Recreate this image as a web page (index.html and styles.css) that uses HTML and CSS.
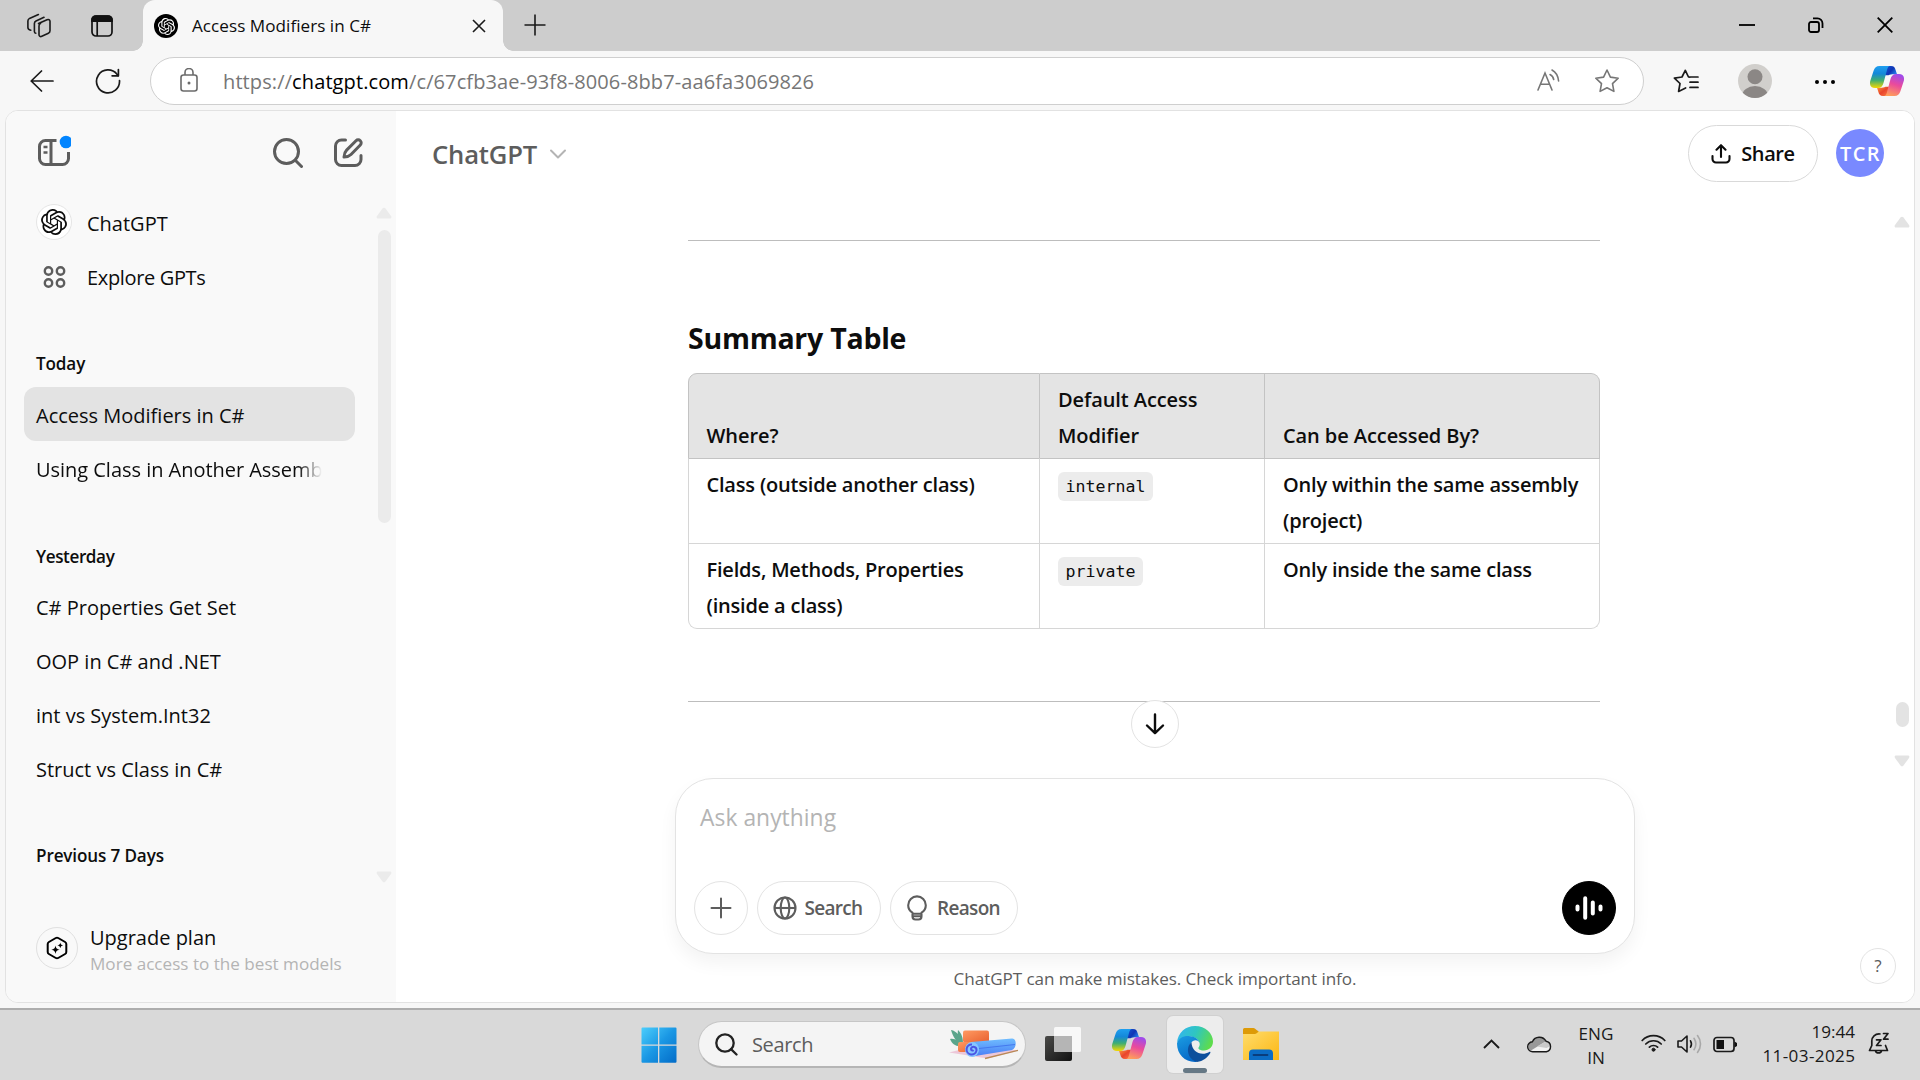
FILE: index.html
```html
<!DOCTYPE html>
<html lang="en">
<head>
<meta charset="utf-8">
<title>Access Modifiers in C#</title>
<link rel="stylesheet" href="styles.css">
</head>
<body>
<svg class="defs" width="0" height="0" aria-hidden="true">
  <defs>
    <symbol id="openai" viewBox="0 0 24 24"><path fill="currentColor" d="M22.2819 9.8211a5.9847 5.9847 0 0 0-.5157-4.9108 6.0462 6.0462 0 0 0-6.5098-2.9A6.0651 6.0651 0 0 0 4.9807 4.1818a5.9847 5.9847 0 0 0-3.9977 2.9 6.0462 6.0462 0 0 0 .7427 7.0966 5.98 5.98 0 0 0 .511 4.9107 6.051 6.051 0 0 0 6.5146 2.9001A5.9847 5.9847 0 0 0 13.2599 24a6.0557 6.0557 0 0 0 5.7718-4.2058 5.9894 5.9894 0 0 0 3.9977-2.9001 6.0557 6.0557 0 0 0-.7475-7.0729zm-9.022 12.6081a4.4755 4.4755 0 0 1-2.8764-1.0408l.1419-.0804 4.7783-2.7582a.7948.7948 0 0 0 .3927-.6813v-6.7369l2.02 1.1686a.071.071 0 0 1 .038.052v5.5826a4.504 4.504 0 0 1-4.4945 4.4944zm-9.6607-4.1254a4.4708 4.4708 0 0 1-.5346-3.0137l.142.0852 4.783 2.7582a.7712.7712 0 0 0 .7806 0l5.8428-3.3685v2.3324a.0804.0804 0 0 1-.0332.0615L9.74 19.9502a4.4992 4.4992 0 0 1-6.1408-1.6464zM2.3408 7.8956a4.485 4.485 0 0 1 2.3655-1.9728V11.6a.7664.7664 0 0 0 .3879.6765l5.8144 3.3543-2.0201 1.1685a.0757.0757 0 0 1-.071 0l-4.8303-2.7865A4.504 4.504 0 0 1 2.3408 7.872zm16.5963 3.8558L13.1038 8.364 15.1192 7.2a.0757.0757 0 0 1 .071 0l4.8303 2.7913a4.4944 4.4944 0 0 1-.6765 8.1042v-5.6772a.79.79 0 0 0-.407-.667zm2.0107-3.0231l-.142-.0852-4.7735-2.7818a.7759.7759 0 0 0-.7854 0L9.409 9.2297V6.8974a.0662.0662 0 0 1 .0284-.0615l4.8303-2.7866a4.4992 4.4992 0 0 1 6.6802 4.66zM8.3065 12.863l-2.02-1.1638a.0804.0804 0 0 1-.038-.0567V6.0742a4.4992 4.4992 0 0 1 7.3757-3.4537l-.142.0805L8.704 5.459a.7948.7948 0 0 0-.3927.6813zm1.0976-2.3654l2.602-1.4998 2.6069 1.4998v2.9994l-2.5974 1.4997-2.6067-1.4997Z"/></symbol>
    <linearGradient id="cpLeft" x1="0" y1="0" x2="0" y2="1"><stop offset="0" stop-color="#1f9ff0"/><stop offset=".35" stop-color="#1488d8"/><stop offset=".65" stop-color="#3fae72"/><stop offset="1" stop-color="#f5d800"/></linearGradient>
    <linearGradient id="cpTop" x1="0" y1="0" x2="1" y2=".6"><stop offset="0" stop-color="#1556d8"/><stop offset=".6" stop-color="#0f35b4"/><stop offset="1" stop-color="#2378e6"/></linearGradient>
    <linearGradient id="cpRight" x1=".6" y1="0" x2=".3" y2="1"><stop offset="0" stop-color="#a04bea"/><stop offset=".45" stop-color="#ea4a9c"/><stop offset="1" stop-color="#ffa05a"/></linearGradient>
    <linearGradient id="cpBottom" x1="0" y1="0" x2="1" y2="1"><stop offset="0" stop-color="#ff9a3c"/><stop offset=".5" stop-color="#e8452c"/><stop offset="1" stop-color="#ff7a45"/></linearGradient>
    <symbol id="copilot" viewBox="0 0 34 30">
      <path fill="url(#cpTop)" d="M16 0h5c3 0 4 1.600 4.700 4.200L27 8.200h-3c-2.500 0-4 .2-5.500 1H15z"/>
      <path fill="url(#cpBottom)" d="M18 30h-5c-3 0-4-1.600-4.700-4.200L7 21.800h3c2.500 0 4-.2 5.500-1H19z"/>
      <path fill="url(#cpLeft)" d="M9.500 0H20c-1.600 0-2.200 1.300-2.800 3.200L13.500 17c-.8 3-2.600 5-5.600 5H5c-4 0-6-3-4.600-7.500L3.600 4.800C4.600 1.800 6.300 0 9.500 0z"/>
      <path fill="url(#cpRight)" d="M24.500 30H14c1.600 0 2.200-1.300 2.800-3.200L20.500 13c.8-3 2.600-5 5.600-5H29c4 0 6 3 4.600 7.500l-3.200 9.700c-1 3-2.700 4.800-5.900 4.800z"/>
    </symbol>
  </defs>
</svg>

<div class="browser">
  <div class="tabbar">
    <div class="tab-tools">
      <svg width="26" height="26" viewBox="0 0 26 26" fill="none" stroke="#1a1a1a" stroke-width="1.600" stroke-linejoin="round" stroke-linecap="round"><path d="M12.500 10.500 21 6.800c1.600-.7 3 0 3 1.500v9.400c0 1.200-.5 2-1.600 2.500l-6.600 3.100c-1.500.7-2.800 0-2.800-1.500v-8.900c0-1.200.4-2 1.500-2.400"/><path d="M9.800 20.200c-1-.1-1.400-.8-1.400-1.800v-8c0-1.300.5-2 1.600-2.500L18 4.300"/><path d="M4.800 17.200c-2-.3-2.900-1-2.900-2.600V8c0-1.300.5-2 1.600-2.600L12.400 1.500"/></svg>
      <svg width="22" height="22" viewBox="0 0 22 22" fill="none" stroke="#111" stroke-width="1.700"><rect x="1" y="1" width="20" height="20" rx="4"/><path fill="#111" d="M1 6.200V5a4 4 0 0 1 4-4h12a4 4 0 0 1 4 4v1.200zM6.200 6v15"/></svg>
    </div>
    <div class="tab">
      <span class="favicon"><svg width="17" height="17"><use href="#openai"/></svg></span>
      <span class="tab-title">Access Modifiers in C#</span>
      <svg width="14" height="14" viewBox="0 0 14 14" stroke="#1a1a1a" stroke-width="1.600" fill="none"><path d="m1 1 12 12M13 1 1 13"/></svg>
    </div>
    <svg class="new-tab" width="22" height="22" viewBox="0 0 22 22" stroke="#1a1a1a" stroke-width="1.600"><path d="M11 .5v21M.5 11h21"/></svg>
    <div class="window-controls">
      <svg width="16" height="16" viewBox="0 0 16 16" stroke="#000" stroke-width="1.800"><path d="M0 8h16"/></svg>
      <svg width="16" height="16" viewBox="0 0 16 16" stroke="#000" stroke-width="1.800" fill="none"><rect x="1" y="5" width="10" height="10" rx="2"/><path d="M5 1.400h4.500a5 5 0 0 1 5 5V11"/></svg>
      <svg width="16" height="16" viewBox="0 0 16 16" stroke="#000" stroke-width="1.800"><path d="m.7.7 14.600 14.600M15.300.7.7 15.300"/></svg>
    </div>
  </div>

  <div class="toolbar">
    <svg class="back" width="24" height="22" viewBox="0 0 24 22" fill="none" stroke="#1a1a1a" stroke-width="1.700" stroke-linejoin="round" stroke-linecap="round"><path d="M23 11H1.200M11.500 1 1.200 11l10.300 10"/></svg>
    <svg class="reload" width="26" height="26" viewBox="0 0 26 26" fill="none" stroke="#1a1a1a" stroke-width="1.700" stroke-linecap="round" stroke-linejoin="round"><path d="M24.500 12.500A11.500 11.500 0 1 1 22 6.200l1 1.500"/><path d="M23.400 1.500v6.300h-6.300"/></svg>
    <div class="address">
      <svg class="lock" width="18" height="24" viewBox="0 0 18 24" fill="none" stroke="#6b6b6b" stroke-width="1.600"><rect x="1" y="7" width="16" height="16" rx="2.500"/><path d="M5 7V4.500a4 4 0 0 1 8 0V7"/><circle cx="9" cy="15" r="1.500" fill="#6b6b6b" stroke="none"/></svg>
      <span class="url">https://<b>chatgpt.com</b>/c/67cfb3ae-93f8-8006-8bb7-aa6fa3069826</span>
      <svg width="24" height="24" viewBox="0 0 24 24" fill="none" stroke="#767676" stroke-width="1.600" stroke-linecap="round"><path d="m1 21 7-17 7 17M3.600 15.200h8.800M13 5.500c2 1 3.300 2.800 3.700 5M15 1c3.800 2 6 5.500 6.600 11"/></svg>
      <svg class="star" width="26" height="26" viewBox="0 0 26 26" fill="none" stroke="#767676" stroke-width="1.600" stroke-linejoin="round"><path d="m13 2 3.400 7.100 7.800 1.100-5.700 5.400 1.400 7.800-6.900-3.700-6.900 3.700 1.400-7.800-5.700-5.400 7.800-1.100z"/></svg>
    </div>
    <svg class="favorites" width="26" height="24" viewBox="0 0 26 24" fill="none" stroke="#1a1a1a" stroke-width="1.700" stroke-linejoin="round" stroke-linecap="round"><path d="M17 8.200 15.500 8l-3.200-6.700L9 8l-7.600 1.200L7 14.500l-1.400 8 7-3.500M17 8h8M17 13.200h8M17 18.400h8"/></svg>
    <svg class="profile" width="34" height="34" viewBox="0 0 34 34"><defs><clipPath id="pc"><circle cx="17" cy="17" r="17"/></clipPath></defs><g clip-path="url(#pc)"><rect width="34" height="34" fill="#d1cfcc"/><circle cx="17" cy="12.700" r="7.500" fill="#8b8785"/><ellipse cx="17" cy="32" rx="13" ry="10" fill="#8b8785"/></g></svg>
    <svg class="more" width="20" height="4" viewBox="0 0 20 4"><circle cx="2" cy="2" r="2"/><circle cx="10" cy="2" r="2"/><circle cx="18" cy="2" r="2"/></svg>
    <svg class="copilot" width="34" height="30"><use href="#copilot"/></svg>
  </div>

  <div class="page">
    <aside class="sidebar">
      <div class="side-head">
        <svg width="34" height="36" viewBox="0 0 34 36" fill="none" stroke="#5d5d5d" stroke-width="3"><path d="M19.500 8.500H8.500a6 6 0 0 0-6 6v12a6 6 0 0 0 6 6h17a6 6 0 0 0 6-6V20M14 8.500v24"/><path d="M6.500 15h4M6.500 20.500h4" stroke-width="2.600"/><circle cx="29" cy="10" r="6.300" fill="#0285ff" stroke="none"/></svg>
        <svg class="find" width="30" height="30" viewBox="0 0 30 30" fill="none" stroke="#5d5d5d" stroke-width="3" stroke-linecap="round"><circle cx="13.500" cy="13.500" r="12"/><path d="m22.300 22.300 6.200 6.200"/></svg>
        <svg class="compose" width="29" height="29" viewBox="0 0 29 29" fill="none" stroke="#5d5d5d" stroke-width="3" stroke-linecap="round" stroke-linejoin="round"><path d="M11.500 2H7.500a6 6 0 0 0-6 6v13.500a6 6 0 0 0 6 6H21a6 6 0 0 0 6-6V17.500"/><path d="M22 2.700a3 3 0 0 1 4.300 4.300L17 16.500c-1.500 1.500-3.500 2.400-7 2.600.2-3.500 1.100-5.500 2.600-7z"/></svg>
      </div>
      <div class="side-body">
        <nav class="side-list">
          <a class="row"><span class="gpt-logo"><svg width="26" height="26"><use href="#openai"/></svg></span>ChatGPT</a>
          <a class="row tight"><svg class="dots4" width="36" height="24" viewBox="0 0 36 24" fill="none" stroke="#5d5d5d" stroke-width="2.400"><circle cx="12.500" cy="6" r="3.700"/><circle cx="24.500" cy="6" r="3.700"/><circle cx="12.500" cy="18" r="3.700"/><circle cx="24.500" cy="18" r="3.700"/></svg>Explore GPTs</a>
          <h3>Today</h3>
          <a class="row active">Access Modifiers in C#</a>
          <a class="row"><span class="fade">Using Class in Another Assemb</span></a>
          <h3 class="yesterday">Yesterday</h3>
          <a class="row">C# Properties Get Set</a>
          <a class="row">OOP in C# and .NET</a>
          <a class="row">int vs System.Int32</a>
          <a class="row">Struct vs Class in C#</a>
          <h3>Previous 7 Days</h3>
        </nav>
        <div class="scroll side-scroll">
          <svg width="16" height="12" viewBox="0 0 16 12"><path d="M6.500 1.500a2 2 0 0 1 3 0l5.500 7.500c.8 1.200.3 2.500-1 2.500H2c-1.300 0-1.800-1.300-1-2.500z"/></svg>
          <span class="thumb"></span>
          <svg class="down" width="16" height="12" viewBox="0 0 16 12"><path d="M6.500 10.500a2 2 0 0 0 3 0L15 3c.8-1.200.3-2.500-1-2.500H2C.7.500.2 1.800 1 3z"/></svg>
        </div>
      </div>
      <div class="upgrade">
        <span class="upgrade-icon"><svg width="22" height="24" viewBox="0 0 22 24" fill="none" stroke="#000" stroke-width="2" stroke-linejoin="round"><path d="M9.800 2a2.400 2.400 0 0 1 2.400 0l6.900 4A2.400 2.400 0 0 1 20.300 8v8a2.400 2.400 0 0 1-1.200 2l-6.900 4a2.400 2.400 0 0 1-2.400 0l-6.900-4a2.400 2.400 0 0 1-1.200-2V8a2.400 2.400 0 0 1 1.200-2z"/><path fill="#000" stroke="none" d="M9.500 9.500c.6 2.900 1.300 3.600 4.200 4.200-2.900.6-3.600 1.300-4.200 4.200-.6-2.900-1.300-3.600-4.200-4.200 2.900-.6 3.600-1.300 4.200-4.200zM14.300 6.500c.4 2 .9 2.500 2.900 2.900-2 .4-2.500.9-2.900 2.900-.4-2-.9-2.500-2.900-2.900 2-.4 2.500-.9 2.900-2.900z"/></svg></span>
        <div><p>Upgrade plan</p><p class="sub">More access to the best models</p></div>
      </div>
    </aside>

    <main class="main">
      <header class="main-head">
        <span class="model">ChatGPT</span>
        <svg width="18" height="10" viewBox="0 0 18 10" fill="none" stroke="#b4b4b4" stroke-width="2" stroke-linecap="round" stroke-linejoin="round"><path d="m2 1.500 7 7 7-7"/></svg>
        <button class="share"><svg width="20" height="20" viewBox="0 0 20 20" fill="none" stroke="#0d0d0d" stroke-width="2.100" stroke-linecap="round" stroke-linejoin="round"><path d="M1.500 12v3a3.500 3.500 0 0 0 3.500 3.500h10a3.500 3.500 0 0 0 3.500-3.500v-3M10 13V1.500M5.500 5.700 10 1.200l4.500 4.500"/></svg><span>Share</span></button>
        <span class="avatar">TCR</span>
      </header>

      <div class="middle">
        <article class="thread">
          <hr>
          <h2>Summary Table</h2>
          <table>
            <thead><tr><th>Where?</th><th>Default Access Modifier</th><th>Can be Accessed By?</th></tr></thead>
            <tbody>
              <tr><td>Class (outside another class)</td><td><code>internal</code></td><td>Only within the same assembly (project)</td></tr>
              <tr><td>Fields, Methods, Properties (inside a class)</td><td><code>private</code></td><td>Only inside the same class</td></tr>
            </tbody>
          </table>
          <hr>
        </article>
        <div class="scroll main-scroll">
          <svg width="16" height="12" viewBox="0 0 16 12"><path d="M6.500 1.500a2 2 0 0 1 3 0l5.500 7.500c.8 1.200.3 2.500-1 2.500H2c-1.300 0-1.800-1.300-1-2.500z"/></svg>
          <span class="thumb"></span>
          <svg class="down" width="16" height="12" viewBox="0 0 16 12"><path d="M6.500 10.500a2 2 0 0 0 3 0L15 3c.8-1.200.3-2.500-1-2.500H2C.7.500.2 1.800 1 3z"/></svg>
        </div>
      </div>

      <section class="composer">
        <button class="to-bottom"><svg width="20" height="22" viewBox="0 0 20 22" fill="none" stroke="#0d0d0d" stroke-width="2.400" stroke-linecap="round" stroke-linejoin="round"><path d="M10 1.500v18.500M2 12.500l8 7.700 8-7.700"/></svg></button>
        <p class="placeholder">Ask anything</p>
        <div class="actions">
          <button class="round"><svg width="22" height="22" viewBox="0 0 22 22" stroke="#5d5d5d" stroke-width="2" stroke-linecap="round"><path d="M11 1.500v19M1.500 11h19"/></svg></button>
          <button class="pill"><svg width="24" height="24" viewBox="0 0 24 24" fill="none" stroke="#5d5d5d" stroke-width="2.100"><circle cx="12" cy="12" r="10.500"/><ellipse cx="12" cy="12" rx="4.300" ry="10.500"/><path d="M1.500 12h21"/></svg><span>Search</span></button>
          <button class="pill reason"><svg width="20" height="26" viewBox="0 0 20 26" fill="none" stroke="#5d5d5d" stroke-width="2.100" stroke-linejoin="round"><path d="M5.500 18.800v-1.200C3 16.200 1.200 13.600 1.200 10.200a8.800 8.800 0 0 1 17.600 0c0 3.400-1.800 6-4.300 7.400v1.200zM5.500 18v3.200c0 2 1.200 3.300 3 3.300h3c1.800 0 3-1.300 3-3.300V18M6 21.300h8"/></svg><span>Reason</span></button>
          <button class="voice"><svg width="28" height="24" viewBox="0 0 28 24" stroke="#fff" stroke-width="4" stroke-linecap="round"><path d="M2.500 10.500v3M10.200 2.200v19.600M17.800 6.500v11M25.500 10.500v3"/></svg></button>
        </div>
      </section>
      <footer class="foot">
        <span>ChatGPT can make mistakes. Check important info.</span>
        <button class="help">?</button>
      </footer>
    </main>
  </div>
</div>

<div class="taskbar">
  <svg class="win" width="36" height="36" viewBox="0 0 36 36"><defs><linearGradient id="wg" x1="0" y1="0" x2="1" y2="1"><stop offset="0" stop-color="#4ccefc"/><stop offset=".5" stop-color="#1a97e4"/><stop offset="1" stop-color="#036cc8"/></linearGradient></defs><path fill="url(#wg)" d="M1.500.5H17v17H.5v-16a1 1 0 0 1 1-1zM18.300.5H34.500a1 1 0 0 1 1 1v16H18.300zM.5 18.700H17v17H1.500a1 1 0 0 1-1-1zM18.300 18.700h17.200v16a1 1 0 0 1-1 1H18.300z"/></svg>
  <div class="task-search">
    <svg width="23" height="23" viewBox="0 0 23 23" fill="none" stroke="#222" stroke-width="2.300" stroke-linecap="round"><circle cx="10" cy="10" r="8.700"/><path d="m16 16.200 5.500 5.300"/></svg>
    <span>Search</span>
    <svg class="art" width="70" height="32" viewBox="0 0 70 32"><defs><linearGradient id="br" x1="0" y1="0" x2="1" y2="1"><stop offset="0" stop-color="#ff9a62"/><stop offset="1" stop-color="#e8602f"/></linearGradient><linearGradient id="mat" x1="0" y1="0" x2="0" y2="1"><stop offset="0" stop-color="#6fbdff"/><stop offset="1" stop-color="#4a7df5"/></linearGradient></defs>
      <path d="M0 24.500 14 21l48 .500 7.500 1-31 8z" fill="#ecc7d8"/><path d="m36 30.500 33-8.200" stroke="#b98955" stroke-width="1.300"/>
      <path d="M2 2c6 1 10 7 12 14C7 14 4 9 2 2zM1 11c5-1 9 2 12 7-6 1-10-2-12-7zM9 2c4 4 5 8 5 13-4-4-6-8-5-13z" fill="#5ba58b"/>
      <rect x="14" y="2.500" width="26" height="12" rx="2" fill="url(#br)"/><rect x="9" y="14" width="20" height="10" rx="2" fill="url(#br)"/>
      <path d="M22 14 63 10.500c5-.5 5 10 0 11.500l-40 6.500z" fill="url(#mat)"/><path d="m30 20.500 36-4" stroke="#4478ee" stroke-width="1"/>
      <ellipse cx="23" cy="21.500" rx="7" ry="7.500" fill="#86c6ff"/><path d="M23 16.500a5 5 0 1 0 4.500 6c.5-4-5-5-5.500-1.500 0 1.500 1.500 2 2.500 1" fill="none" stroke="#4a55e4" stroke-width="2"/></svg>
  </div>
  <svg class="taskview" width="36" height="34" viewBox="0 0 36 34"><defs><linearGradient id="tv" x1="0" y1="0" x2="1" y2="1"><stop offset="0" stop-color="#4a4a48"/><stop offset="1" stop-color="#111"/></linearGradient></defs><rect y="9" width="27" height="25" rx="2" fill="url(#tv)"/><rect x="9" width="27" height="25" rx="1.500" fill="#fff" opacity=".8"/><path d="M9 9h18v16H10.500A1.500 1.500 0 0 1 9 23.500z" fill="#b5b5b5"/></svg>
  <svg class="task-copilot" width="34" height="30"><use href="#copilot"/></svg>
  <div class="edge-tile">
    <svg width="36" height="36" viewBox="0 0 36 36"><defs><linearGradient id="e1" x1="0" y1=".2" x2="1" y2=".5"><stop offset="0" stop-color="#32b4f0"/><stop offset=".5" stop-color="#2fc6c0"/><stop offset="1" stop-color="#5edc4c"/></linearGradient><linearGradient id="e2" x1="0" y1="0" x2=".4" y2="1"><stop offset="0" stop-color="#1b9de2"/><stop offset="1" stop-color="#0669c8"/></linearGradient></defs>
      <path fill="url(#e1)" d="M0 16.500C1 6.500 8.500 0 18 0c10.500 0 18 7.500 18 15.500 0 5.500-4 9-9 9-4.500 0-6.300-1.700-5.300-3.200 1-1.600 1.300-3 .8-4.300-1-4-5-6.500-10-6.500C7 10.500 2 13 0 16.500z"/>
      <path fill="url(#e2)" d="M0 17.500C1 12.500 6 9.800 11.500 10c5.500 0 9.500 2.800 11 6.300-1.500-1.800-4-2.800-6.500-1.300C10 18.500 11 28.500 20 35.900 9 37 0 29 0 17.500z"/>
      <path fill="#0d4f9c" d="M14.500 16C8 22 11 33.500 20 35.900c6-.6 10.500-4 13.300-8.900.4-.8-.3-1.400-1-1C24.500 30.500 14.500 26 14.500 16z"/></svg>
    <i class="indicator"></i>
  </div>
  <svg class="folder" width="36" height="33" viewBox="0 0 36 33"><defs><linearGradient id="fg" x1="0" y1="0" x2="1" y2="1"><stop offset="0" stop-color="#ffdc6b"/><stop offset="1" stop-color="#fcb714"/></linearGradient></defs><path fill="#dd9a07" d="M0 1.500A1.500 1.500 0 0 1 1.500 0h9c2 0 3 3 5 3v5H0z"/><path fill="url(#fg)" d="M0 6h12c2 0 2.500-2.500 4.500-2.500H36V32H0z"/><path fill="#0b6cc4" d="M6 32v-6.500a4 4 0 0 1 4-4h16a4 4 0 0 1 4 4V32z"/><path d="M10.500 27h14" stroke="#0a3d7c" stroke-width="1.800" stroke-linecap="round"/></svg>

  <div class="tray">
    <svg class="chev" width="17" height="10" viewBox="0 0 17 10" fill="none" stroke="#1a1a1a" stroke-width="1.900"><path d="m1 9 7.500-7.500L16 9"/></svg>
    <svg class="cloud" width="25" height="18" viewBox="0 0 25 18"><path d="M6 16.800a5 5 0 0 1-.6-10A7.600 7.600 0 0 1 19 6.200a5.400 5.400 0 0 1 .3 10.600z" fill="#f2f2f2"/><path d="M2 14C.5 10 3 7 5.400 6.800A7.600 7.600 0 0 1 19 6.200L4 15.500z" fill="#999"/><path d="m10 11.500 9-5.300c2 0 4.500 2 4.500 5l-4 1.800z" fill="#c9c9c9"/><path d="M6 16.800a5 5 0 0 1-.6-10A7.600 7.600 0 0 1 19 6.200a5.400 5.400 0 0 1 .3 10.600z" fill="none" stroke="#1a1a1a" stroke-width="1.400"/></svg>
    <div class="lang"><span>ENG</span><span>IN</span></div>
    <svg class="wifi" width="25" height="18" viewBox="0 0 25 18" fill="none" stroke="#1a1a1a" stroke-width="1.700" stroke-linecap="round"><path d="M1.200 6.500a15.600 15.600 0 0 1 22.600 0M4.800 10a10.800 10.800 0 0 1 15.400 0M8.400 13.200a5.800 5.800 0 0 1 8.200 0"/><circle cx="12.500" cy="15.700" r="1.500" fill="#1a1a1a" stroke-width="1"/></svg>
    <svg class="vol" width="25" height="20" viewBox="0 0 25 20" fill="none" stroke="#1a1a1a" stroke-width="1.600" stroke-linejoin="round" stroke-linecap="round"><path d="M1 7v6h3.500l5.500 5V2L4.500 7zM13.500 6.800c1.200 2 1.200 4.400 0 6.400"/><path stroke="#a8a8a8" d="M17 4.300c2.300 3.500 2.300 7.900 0 11.400M20.500 1.500c4 5 4 12 0 17"/></svg>
    <svg class="bat" width="25" height="17" viewBox="0 0 25 17" fill="none" stroke="#1a1a1a" stroke-width="1.700"><rect x="1" y="1.500" width="20" height="14" rx="3"/><path d="M3.500 4h7.500v9H3.500zM21.500 5.500l2.500 1.500v3l-2.500 1.500z" fill="#111" stroke="none"/></svg>
    <div class="clock"><span>19:44</span><span class="date">11-03-2025</span></div>
    <svg class="bell" width="22" height="23" viewBox="0 0 22 23" fill="none" stroke="#1a1a1a" stroke-width="1.700" stroke-linecap="round" stroke-linejoin="round"><path d="M12 2C7 1.500 3.800 5 3.800 9v4.500L1.500 18.500h18l-2-5M7.500 18.800c.5 2.800 5.500 2.800 6 0M8.500 7.800h4.500l-4.500 5.700h4.500M15.500 1.500h4.500l-4.500 5.700h4.500"/></svg>
  </div>
</div>
</body>
</html>
```
FILE: styles.css
```css
* { box-sizing: border-box; }
html, body { margin: 0; height: 100%; }
body {
  display: flex;
  flex-direction: column;
  width: 1920px;
  height: 1080px;
  overflow: hidden;
  background: #d9d9d9;
  color: #0d0d0d;
  font: 400 20px/1.4 "Open Sans", "Noto Sans", sans-serif;
}
h2, h3, p, hr { margin: 0; }
svg { display: block; flex: none; }
.defs { position: absolute; }
button {
  margin: 0;
  padding: 0;
  border: 1px solid #e3e3e3;
  background: #fff;
  font: inherit;
  letter-spacing: inherit;
  color: inherit;
  display: flex;
  align-items: center;
  justify-content: center;
}

/* Browser chrome */
.browser {
  height: 1010px;
  background: #f7f7f7;
  border-bottom: 2px solid #adadad;
  display: flex;
  flex-direction: column;
}
.tabbar { height: 51px; flex: none; display: flex; background: #cdcdcd; }
.tab-tools {
  width: 143px;
  display: flex;
  align-items: center;
  gap: 39px;
  padding-left: 26px;
  background: #cdcdcd;
}
.tab {
  position: relative;
  width: 360px;
  display: flex;
  align-items: center;
  padding: 1px 17px 0 11px;
  border-radius: 12px 12px 0 0;
  background: #f7f7f7;
}
.tab::before, .tab::after {
  content: "";
  position: absolute;
  bottom: 0;
  width: 10px;
  height: 10px;
}
.tab::before { left: -10px; background: radial-gradient(circle at 0 0, transparent 9.5px, #f7f7f7 10px); }
.tab::after { right: -10px; background: radial-gradient(circle at 100% 0, transparent 9.5px, #f7f7f7 10px); }
.favicon {
  width: 24px;
  height: 24px;
  border-radius: 50%;
  background: #000;
  color: #fff;
  display: flex;
  align-items: center;
  justify-content: center;
}
.tab-title { flex: 1; margin-left: 14px; font-size: 17.1px; letter-spacing: .04px; }
.new-tab { margin: 14px 0 0 21px; }
.window-controls { margin-left: auto; display: flex; gap: 53px; padding: 17px 27px 0 0; }

.toolbar { height: 59px; flex: none; display: flex; align-items: center; padding: 1px 16px 0 30px; }
.reload { margin-left: 41px; }
.address {
  width: 1494px;
  height: 48px;
  margin-left: 29px;
  padding: 0 23px 0 29px;
  border: 1px solid #cfcfcf;
  border-radius: 24px;
  background: #fff;
  display: flex;
  align-items: center;
}
.lock { margin: 0 25px 2px 0; }
.url { flex: 1; color: #767676; letter-spacing: .11px; padding-top: 1px; }
.url b { font-weight: 400; color: #000; }
.star { margin-left: 33px; }
.favorites { margin-left: 29px; }
.profile { margin-left: 39px; }
.more { margin: 2px 0 0 43px; }
.copilot { margin-left: 35px; }

/* Page frame */
.page {
  height: 893px;
  margin: 0 5px;
  border: 1px solid #e2e2e2;
  border-radius: 13px;
  background: #fff;
  overflow: hidden;
  display: flex;
}

/* Sidebar */
.sidebar { width: 390px; flex: none; background: #f9f9f9; display: flex; flex-direction: column; }
.side-head { height: 84px; flex: none; display: flex; padding: 21px 0 0 31px; }
.find { margin: 6px 0 0 202px; }
.compose { margin: 6px 0 0 31px; }
.side-body { height: 692px; flex: none; display: flex; justify-content: space-between; }
.side-list { width: 331px; margin-left: 18px; }
.row {
  height: 54px;
  padding: 3px 12px 0;
  border-radius: 12px;
  display: flex;
  align-items: center;
  white-space: nowrap;
}
.row.tight { letter-spacing: -.35px; }
.row.active { background: #e3e3e3; }
.gpt-logo {
  width: 36px;
  height: 36px;
  margin: -4px 15px 0 0;
  border: 1px solid #e5e5e5;
  border-radius: 50%;
  background: #fff;
  display: flex;
  align-items: center;
  justify-content: center;
}
.dots4 { margin: -2px 15px 0 0; }
.fade {
  width: 290px;
  letter-spacing: -.03px;
  -webkit-mask-image: linear-gradient(to right, #000 262px, transparent 286px);
  mask-image: linear-gradient(to right, #000 262px, transparent 286px);
}
.side-list h3 {
  height: 84px;
  padding: 37px 12px 0;
  font-size: 17.1px;
  font-weight: 600;
  letter-spacing: -.13px;
  line-height: 48px;
}
.side-list h3.yesterday { padding-top: 38px; letter-spacing: -.4px; }
.scroll { width: 16px; display: flex; flex-direction: column; align-items: center; fill: #ebebeb; }
.thumb { width: 13px; border-radius: 7px; background: #ebebeb; }
.side-scroll { margin-right: 4px; padding-top: 12px; }
.side-scroll .thumb { height: 293px; margin-top: 11px; }
.side-scroll .down { margin-top: 348px; }
.upgrade { flex: 1; display: flex; gap: 12px; padding: 36px 0 0 30px; }
.upgrade-icon {
  width: 42px;
  height: 42px;
  margin-top: 4px;
  border: 1px solid #e0e0e0;
  border-radius: 50%;
  display: flex;
  align-items: center;
  justify-content: center;
}
.upgrade p { padding-top: 1px; line-height: 28px; }
.upgrade .sub { padding: 0; font-size: 17.1px; line-height: 24px; color: #b4b4b4; }

/* Conversation */
.main { flex: 1; min-width: 0; display: flex; flex-direction: column; background: #fff; }
.main-head { height: 85px; flex: none; display: flex; align-items: center; padding: 0 30px 0 36px; }
.model {
  margin: 2px 12px 0 0;
  font-size: 25.65px;
  font-weight: 600;
  letter-spacing: -.2px;
  color: #5d5d5d;
}
.share {
  width: 130px;
  height: 57px;
  margin-left: auto;
  gap: 10px;
  border-color: #d9d9d9;
  border-radius: 29px;
  font-weight: 600;
  letter-spacing: -.4px;
}
.share span { padding-top: 1px; }
.avatar {
  width: 48px;
  height: 48px;
  margin: -1px 0 0 18px;
  padding: 2px 0 0 1px;
  border-radius: 50%;
  background: #7989ff;
  color: #fff;
  font-weight: 600;
  letter-spacing: 1.400px;
  display: flex;
  align-items: center;
  justify-content: center;
}
.middle { height: 582px; flex: none; display: flex; justify-content: space-between; }
.thread { width: 912px; margin-left: 292px; padding-top: 44px; }
.thread hr { height: 1px; border: 0; background: #bdbdbd; }
.thread h2 {
  margin: 77px 0 15px;
  font-size: 28.5px;
  font-weight: 700;
  line-height: 40px;
  letter-spacing: -.25px;
}
table {
  width: 912px;
  margin-bottom: 72px;
  table-layout: fixed;
  border-collapse: separate;
  border-spacing: 0;
  font-weight: 600;
  line-height: 36px;
  letter-spacing: -.19px;
}
th, td {
  height: 85px;
  padding: 8px 14px 4px 18px;
  border: 0 solid #d6d6d6;
  border-width: 0 1px 1px 0;
  text-align: left;
  vertical-align: top;
}
th {
  height: 86px;
  border-color: #c3c3c3;
  border-top-width: 1px;
  background: #e4e4e4;
  font-weight: 600;
  vertical-align: bottom;
  letter-spacing: -.08px;
}
th:first-child, td:first-child { border-left-width: 1px; width: 352px; padding-left: 17.5px; padding-right: 60px; }
th:nth-child(2) { width: 225px; padding-right: 40px; }
th:first-child { border-top-left-radius: 9px; }
th:last-child { border-top-right-radius: 9px; }
tr:last-child td:first-child { border-bottom-left-radius: 9px; }
tr:last-child td:last-child { border-bottom-right-radius: 9px; }
code {
  display: block;
  width: max-content;
  height: 29px;
  margin-top: 5px;
  padding: 0 7.500px;
  border-radius: 6px;
  background: #ececec;
  font: 400 16.600px/30px "DejaVu Sans Mono", monospace;
  letter-spacing: 0;
}
.main-scroll { margin-right: 4px; padding-top: 20px; fill: #e3e3e3; }
.main-scroll .thumb { height: 25px; margin-top: 474px; background: #e3e3e3; }
.main-scroll .down { margin-top: 28px; }

/* Composer */
.composer {
  position: relative;
  width: 960px;
  height: 176px;
  flex: none;
  margin-left: 279px;
  padding: 23px 18px 18px;
  border: 1px solid #e3e3e3;
  border-radius: 38px;
  background: #fff;
  box-shadow: 0 9px 18px rgba(0, 0, 0, .05);
  display: flex;
  flex-direction: column;
  justify-content: space-between;
}
.to-bottom {
  position: absolute;
  left: 455px;
  top: -79px;
  width: 48px;
  height: 48px;
  border-radius: 50%;
}
.placeholder { padding-left: 6px; font-size: 22.8px; line-height: 32px; letter-spacing: .05px; color: #b4b4b4; }
.actions { display: flex; gap: 9px; color: #5d5d5d; font-weight: 600; font-size: 19px; letter-spacing: -.7px; }
.round, .voice { width: 54px; height: 54px; border-radius: 50%; }
.pill { width: 124px; height: 54px; gap: 8px; padding-right: 3px; border-radius: 27px; }
.pill span { padding-top: 1px; }
.reason { width: 128px; gap: 10px; padding-right: 1px; }
.voice { margin-left: auto; background: #000; border-color: #000; }
.foot { position: relative; flex: 1; padding: 13px 0 0 279px; font-size: 17.1px; letter-spacing: -.07px; color: #5d5d5d; }
.foot span { display: block; width: 960px; text-align: center; }
.help {
  position: absolute;
  right: 18px;
  top: -6px;
  width: 36px;
  height: 36px;
  border-radius: 50%;
  color: #5d5d5d;
}

/* Taskbar */
.taskbar { height: 70px; display: flex; align-items: flex-start; background: #d9d9d9; }
.win { margin: 17px 0 0 641px; }
.task-search {
  width: 328px;
  height: 47px;
  margin: 11px 0 0 21px;
  padding: 0 6px 0 16px;
  border: 1px solid #c6c6c6;
  border-bottom: 2px solid #b5b5b5;
  border-radius: 24px;
  background: #f4f4f4;
  display: flex;
  align-items: center;
}
.task-search span { flex: 1; margin-left: 14px; padding-top: 1px; color: #5c5c5c; letter-spacing: -.35px; }
.taskview { margin: 17px 0 0 19px; }
.task-copilot { margin: 19px 0 0 31px; }
.edge-tile {
  width: 56px;
  height: 57px;
  margin: 6px 0 0 21px;
  padding-top: 10px;
  border-radius: 6px;
  background: #ededed;
  box-shadow: 0 0 0 1px #d0d0d0;
  display: flex;
  flex-direction: column;
  align-items: center;
  justify-content: space-between;
}
.indicator { width: 24px; height: 5px; border-radius: 3px; background: #667885; }
.folder { margin: 18px 0 0 20px; }
.tray { margin-left: 204px; display: flex; font-size: 17.1px; line-height: 23.5px; color: #1a1a1a; }
.chev { margin-top: 29px; }
.cloud { margin: 25px 0 0 27px; }
.lang { width: 50px; margin: 12px 0 0 19px; text-align: center; display: flex; flex-direction: column; }
.wifi { margin: 24px 0 0 20px; }
.vol { margin: 24px 0 0 11px; }
.bat { margin: 26px 0 0 11px; }
.clock { width: 105px; margin: 10px 0 0 12px; text-align: right; display: flex; flex-direction: column; }
.date { letter-spacing: .38px; margin-right: -.4px; }
.bell { margin: 22px 0 0 13px; }
```
